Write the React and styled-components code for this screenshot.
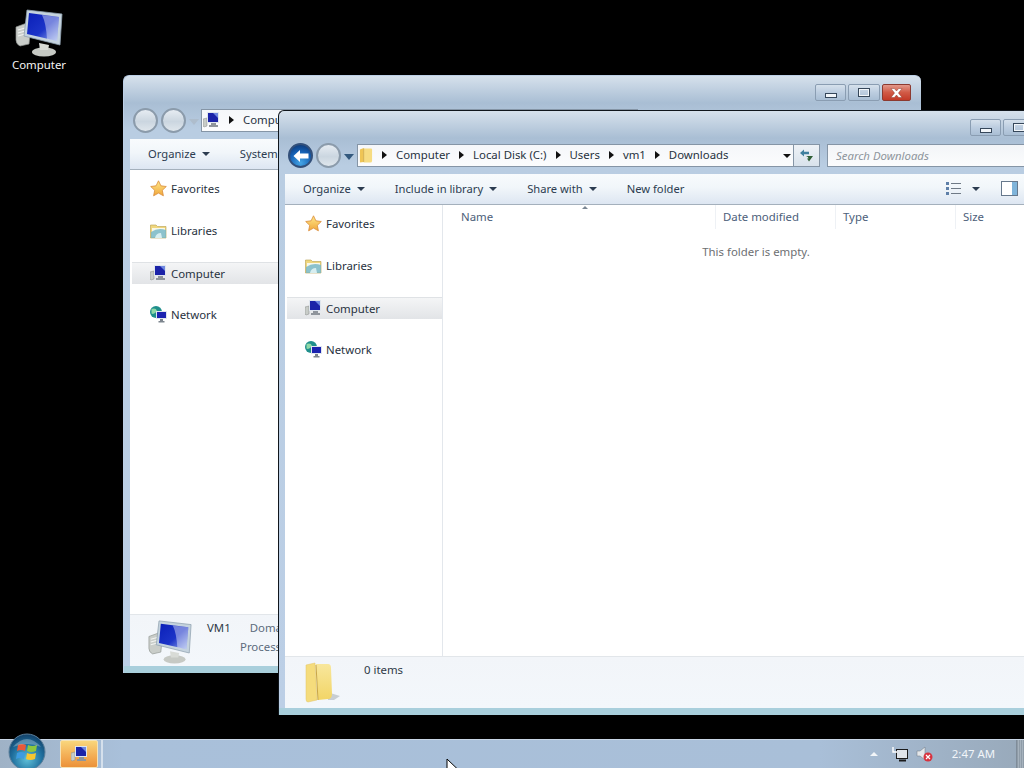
import React from 'react';
import styled, { createGlobalStyle } from 'styled-components';

const ComputerIcon = ({ size = 48 }) => (
  <svg width={size} height={size} viewBox="0 0 48 48">
    <defs>
      <linearGradient id="screen" x1="0" y1="0" x2="1" y2="1">
        <stop offset="0" stopColor="#0a1fb8" />
        <stop offset="0.55" stopColor="#1c34c8" />
        <stop offset="1" stopColor="#9fb4ec" />
      </linearGradient>
    </defs>
    <path d="M1 18 L12 14 L16 15 L14 35 L5 37 Q1 35 1 31 Z" fill="#c9cdc9" stroke="#8f9490" strokeWidth="0.7" />
    <path d="M3 21 L10 19 M3 24 L10 22 M3 27 L10 25" stroke="#f2f4f2" strokeWidth="1.2" />
    <ellipse cx="29" cy="43" rx="12" ry="4.5" fill="#c6c9c4" />
    <path d="M24 34 L34 36 L33 41 L25 41 Z" fill="#d8dbd6" />
    <path d="M12 1 L47 5 L45 36 L9 27 Z" fill="#c5d3de" stroke="#8ea0ae" strokeWidth="0.8" />
    <path d="M14 4 L44 8 L42 32 L12 25 Z" fill="url(#screen)" />
    <path d="M27 6 L44 8 L42 32 L32 30 Q31 14 27 6 Z" fill="#fff" opacity="0.4" />
  </svg>
);

const SmallComputerIcon = () => (
  <svg width="17" height="16" viewBox="0 0 17 16">
    <path d="M0 7 L4 6 L4 14 L1 15 L0 14 Z" fill="#c8ccc8" stroke="#868b88" strokeWidth="0.5" />
    <path d="M4 0 H16 V11 H4 Z" fill="#dfe6ee" />
    <path d="M5 1 H15 V10 H5 Z" fill="#1b23a8" />
    <path d="M10 1 H15 V6 Z" fill="#6f88e0" />
    <path d="M8 11 H13 V13 H15 V15 H6 V13 H8 Z" fill="#8f959c" />
  </svg>
);

const StarIcon = () => (
  <svg width="17" height="17" viewBox="0 0 17 17">
    <defs>
      <linearGradient id="star" x1="0" y1="0" x2="0" y2="1">
        <stop offset="0" stopColor="#ffe98a" />
        <stop offset="1" stopColor="#f0a63a" />
      </linearGradient>
    </defs>
    <path d="M8.5 0.8 L10.9 5.8 L16.3 6.5 L12.3 10.3 L13.4 15.8 L8.5 13.1 L3.6 15.8 L4.7 10.3 L0.7 6.5 L6.1 5.8 Z" fill="url(#star)" stroke="#d98b3a" strokeWidth="0.8" />
  </svg>
);

const LibraryIcon = () => (
  <svg width="17" height="16" viewBox="0 0 17 16">
    <path d="M0.5 2 H6 L7.5 3.5 H16 V15 H0.5 Z" fill="#f0d77e" stroke="#b79e4e" strokeWidth="0.6" />
    <path d="M2 5 H15 V14 H2 Z" fill="#f8f8ea" />
    <path d="M1 9 Q8 4 16 7 V15 H1 Z" fill="#79b9c8" opacity="0.85" />
    <path d="M5 15 Q6 10 11 10 L12 15 Z" fill="#d7eef0" />
  </svg>
);

const NetworkIcon = () => (
  <svg width="17" height="17" viewBox="0 0 17 17">
    <circle cx="6" cy="6" r="6" fill="#1f8f8c" />
    <path d="M1.5 3 Q6 1.5 7 5 Q4 9 1.5 7.5 Z" fill="#8fd8a8" />
    <path d="M6 5 H17 V13 H6 Z" fill="#dfe6ee" />
    <path d="M7 6 H16 V12 H7 Z" fill="#1b23b0" />
    <path d="M10 13 H13 V15 H14.5 V16.5 H8.5 V15 H10 Z" fill="#7d858e" />
  </svg>
);

const FolderSmall = () => (
  <svg width="14" height="17" viewBox="0 0 15 17">
    <path d="M1 2 L5 0.5 V15.5 L1 16 Z" fill="#efc555" />
    <path d="M5 1 H13 Q14 1 14 2 V14 Q14 16 12 16 H5 Z" fill="#f6dc82" />
    <path d="M5 1 V15.5" stroke="#caa23f" strokeWidth="0.8" />
  </svg>
);

const FolderLarge = () => (
  <svg width="38" height="42" viewBox="0 0 38 42">
    <defs>
      <linearGradient id="bigFolder" x1="0" y1="0" x2="0" y2="1">
        <stop offset="0" stopColor="#f8e79c" />
        <stop offset="1" stopColor="#f2d566" />
      </linearGradient>
    </defs>
    <path d="M23 30 L36 34 L30 38 L24 38 Z" fill="#b9c0c6" opacity="0.75" />
    <path d="M2 3 L11 1 L13 38 L4 40 Q2 40 2 37 Z" fill="#f5dc7c" stroke="#e2c466" strokeWidth="0.5" />
    <path d="M12 2 H24 Q27 2 27 6 L28 32 Q28 37 24 37 L14 38 Z" fill="url(#bigFolder)" />
    <path d="M12 3 L14 38" stroke="#c9a645" strokeWidth="1" />
  </svg>
);

const ArrowIcon = () => (
  <svg width="18" height="14" viewBox="0 0 18 14">
    <path d="M8 1 L1.5 7 L8 13 V9.5 H16.5 V4.5 H8 Z" fill="#fff" />
  </svg>
);

const RefreshIcon = () => (
  <svg width="15" height="15" viewBox="0 0 15 15">
    <path d="M1 5 L5 1.5 V3.8 H10 V6.2 H5 V8.5 Z" fill="#3f7f9e" />
    <path d="M14 8 L10 13.5 L8 10.5 H9.5 Q9.5 8.5 7 8 Z" fill="#2f5f35" />
  </svg>
);

const ViewsIcon = () => (
  <svg width="16" height="13" viewBox="0 0 16 13">
    <g fill="#5e7fa8">
      <rect x="0" y="0" width="3" height="3" />
      <rect x="0" y="5" width="3" height="3" />
      <rect x="0" y="10" width="3" height="3" />
    </g>
    <g fill="#6f7a86">
      <rect x="5" y="1" width="10" height="1" />
      <rect x="5" y="6" width="10" height="1" />
      <rect x="5" y="11" width="10" height="1" />
    </g>
  </svg>
);

const PaneIcon = () => (
  <svg width="17" height="15" viewBox="0 0 17 15">
    <rect x="0.5" y="0.5" width="16" height="14" fill="#fff" stroke="#66788c" />
    <rect x="11" y="1" width="5" height="13" fill="#7fb4da" />
  </svg>
);

const CloseGlyph = () => (
  <svg width="13" height="10" viewBox="0 0 13 10">
    <path d="M1 0.5 H4.3 L6.5 3 L8.7 0.5 H12 L8.4 5 L12 9.5 H8.7 L6.5 7 L4.3 9.5 H1 L4.6 5 Z" fill="#fff" stroke="#7a2a20" strokeWidth="0.4" />
  </svg>
);

const WindowsOrb = () => (
  <svg width="38" height="38" viewBox="0 0 38 38">
    <defs>
      <radialGradient id="orb" cx="0.5" cy="0.7" r="0.7">
        <stop offset="0" stopColor="#5fc0d8" />
        <stop offset="0.6" stopColor="#1f6f9e" />
        <stop offset="1" stopColor="#123f66" />
      </radialGradient>
    </defs>
    <circle cx="19" cy="19" r="18" fill="url(#orb)" stroke="#5c7f9a" />
    <path d="M10 12 Q14 10 18 12 L17 18 Q13 16 9 18 Z" fill="#e8593a" />
    <path d="M20 12 Q24 14 29 12 L28 18 Q23 20 19 18 Z" fill="#8cc63f" />
    <path d="M9 20 Q13 18 17 20 L16 26 Q12 24 8 26 Z" fill="#3d9be0" />
    <path d="M19 20 Q23 22 28 20 L27 26 Q22 28 18 26 Z" fill="#f7c631" />
    <path d="M5 14 Q19 -2 33 14 Q19 8 5 14 Z" fill="#fff" opacity="0.28" />
  </svg>
);

const NetworkTrayIcon = () => (
  <svg width="16" height="16" viewBox="0 0 16 16">
    <rect x="4.5" y="3.5" width="11" height="9" fill="#dfe4ea" stroke="#1b1b1b" />
    <path d="M1 1 V6 H5" fill="none" stroke="#fff" strokeWidth="1.4" />
    <path d="M7 14.5 H14" stroke="#1b1b1b" strokeWidth="2" />
  </svg>
);

const VolumeIcon = () => (
  <svg width="17" height="16" viewBox="0 0 17 16">
    <path d="M1 5 H4 L9 1 V14 L4 10 H1 Z" fill="#e4e7ea" stroke="#6c7680" strokeWidth="0.5" />
    <circle cx="12" cy="11" r="4.5" fill="#d8333f" />
    <path d="M10 9 L14 13 M14 9 L10 13" stroke="#fff" strokeWidth="1.2" />
  </svg>
);

const CursorIcon = () => (
  <svg width="13" height="20" viewBox="0 0 13 20">
    <path d="M1 1 V16 L4.5 12.5 L7 18 L9.5 17 L7 11.5 H12 Z" fill="#fff" stroke="#000" strokeWidth="1" />
  </svg>
);

const navItems = [
  { label: 'Favorites', icon: <StarIcon /> },
  { label: 'Libraries', icon: <LibraryIcon /> },
  { label: 'Computer', icon: <SmallComputerIcon />, active: true },
  { label: 'Network', icon: <NetworkIcon /> },
];

const columns = [
  { label: 'Name', width: 262 },
  { label: 'Date modified', width: 120 },
  { label: 'Type', width: 120 },
  { label: 'Size', width: 90 },
];

const NavPane = ({ width }) => (
  <Pane $width={width}>
    {navItems.map((item) => (
      <NavItem key={item.label} $active={item.active}>
        <NavIcon>{item.icon}</NavIcon>
        {item.label}
      </NavItem>
    ))}
  </Pane>
);

const Controls = () => (
  <ControlRow>
    <ControlButton $w={31}><MinGlyph /></ControlButton>
    <ControlButton $w={32}><MaxGlyph /></ControlButton>
    <CloseButton><CloseGlyph /></CloseButton>
  </ControlRow>
);

const App = () => (
  <>
    <GlobalStyle />
    <Desktop>
      <DesktopIcon>
        <ComputerIcon />
        <DesktopLabel>Computer</DesktopLabel>
      </DesktopIcon>

      <Window $left={123} $top={75} $height={598} $z={1} $edge="#bccfe6">
        <TitleBar><Controls /></TitleBar>
        <NavRow>
          <RoundButton />
          <RoundButton />
          <HistoryCaret $faded />
          <AddressBar>
            <Crumb><SmallComputerIcon /></Crumb>
            <CrumbArrow />
            <Crumb>Computer</Crumb>
          </AddressBar>
        </NavRow>
        <Toolbar>
          <ToolButton>Organize<Caret /></ToolButton>
          <ToolButton>System properties</ToolButton>
        </Toolbar>
        <Body $height={444}>
          <NavPane width={160} />
        </Body>
        <Details>
          <DetailsIcon $pad={18}><ComputerIcon size={44} /></DetailsIcon>
          <SystemInfo>
            <InfoRow>
              <span>VM1</span>
              <InfoMuted>Domain</InfoMuted>
            </InfoRow>
            <ProcessorRow>Processor</ProcessorRow>
          </SystemInfo>
        </Details>
      </Window>

      <Window $left={278} $top={110} $height={605} $z={2} $edge="#10161c">
        <TitleBar><Controls /></TitleBar>
        <NavRow>
          <BackButton><ArrowIcon /></BackButton>
          <RoundButton />
          <HistoryCaret />
          <AddressBar>
            <Crumb><FolderSmall /></Crumb>
            <CrumbArrow />
            {['Computer', 'Local Disk (C:)', 'Users', 'vm1', 'Downloads'].map((name, i, all) => (
              <React.Fragment key={name}>
                <Crumb>{name}</Crumb>
                {i < all.length - 1 && <CrumbArrow />}
              </React.Fragment>
            ))}
            <AddressEnd><Caret $dark /></AddressEnd>
          </AddressBar>
          <RefreshButton><RefreshIcon /></RefreshButton>
          <SearchBox>Search Downloads</SearchBox>
        </NavRow>
        <Toolbar>
          <ToolButton>Organize<Caret /></ToolButton>
          <ToolButton>Include in library<Caret /></ToolButton>
          <ToolButton>Share with<Caret /></ToolButton>
          <ToolButton>New folder</ToolButton>
          <ToolSpacer />
          <ViewButton><ViewsIcon /><Caret /></ViewButton>
          <PaneButton><PaneIcon /></PaneButton>
        </Toolbar>
        <Body $height={451}>
          <NavPane width={158} />
          <Files>
            <ColumnHeader>
              {columns.map((col) => (
                <Column key={col.label} $width={col.width}>{col.label}</Column>
              ))}
              <SortMark />
            </ColumnHeader>
            <EmptyNote>This folder is empty.</EmptyNote>
          </Files>
        </Body>
        <Details>
          <DetailsIcon $pad={19}><FolderLarge /></DetailsIcon>
          <ItemCount>0 items</ItemCount>
        </Details>
      </Window>

      <Taskbar>
        <StartOrb><WindowsOrb /></StartOrb>
        <TaskButton><SmallComputerIcon /></TaskButton>
        <TaskEdge />
        <TaskSpacer />
        <Tray>
          <TrayCaret />
          <NetworkTrayIcon />
          <TrayVolume><VolumeIcon /></TrayVolume>
          <Clock>2:47 AM</Clock>
          <ShowDesktop />
        </Tray>
      </Taskbar>

      <Pointer><CursorIcon /></Pointer>
    </Desktop>
  </>
);

export default App;

const GlobalStyle = createGlobalStyle`
  html, body {
    margin: 0;
    padding: 0;
    background: #000;
  }
  * {
    box-sizing: border-box;
  }
`;

const Desktop = styled.div`
  position: relative;
  width: 1024px;
  height: 768px;
  overflow: hidden;
  background: #000;
  font-family: "Noto Sans", "Open Sans", sans-serif;
  font-size: 11.4px;
`;

const DesktopIcon = styled.div`
  position: absolute;
  left: 4px;
  top: 9px;
  width: 70px;
  display: flex;
  flex-direction: column;
  align-items: center;
`;

const DesktopLabel = styled.div`
  color: #f4f4f4;
  line-height: 16px;
`;

const Window = styled.div`
  position: absolute;
  left: ${({ $left }) => $left}px;
  top: ${({ $top }) => $top}px;
  z-index: ${({ $z }) => $z};
  width: 798px;
  height: ${({ $height }) => $height}px;
  display: flex;
  flex-direction: column;
  padding: 0 7px 7px 6px;
  border-radius: 6px 6px 0 0;
  border: 1px solid ${({ $edge }) => $edge};
  border-width: 1px 0 0 1px;
  background: linear-gradient(180deg, #d6e1ec 0%, #a9bed4 4.5%, #b9cde2 9%, #bccfe6 100%);
  box-shadow: inset 0 -7px 0 #a9cfdc;
`;

const TitleBar = styled.div`
  height: 32px;
  flex: none;
  display: flex;
  justify-content: flex-end;
  padding: 8px 3px 0 0;
`;

const ControlRow = styled.div`
  display: flex;
  gap: 2px;
  height: 17px;
`;

const ControlButton = styled.div`
  width: ${({ $w }) => $w}px;
  display: flex;
  align-items: center;
  justify-content: center;
  border: 1px solid #8a9db2;
  border-radius: 2px;
  background: linear-gradient(180deg, #d6e1ec 0%, #bccde0 50%, #a9bed4 100%);
`;

const MinGlyph = styled.div`
  width: 12px;
  height: 5px;
  margin-top: 5px;
  border: 1px solid #36475a;
  background: #f2f6fa;
`;

const MaxGlyph = styled.div`
  width: 12px;
  height: 9px;
  border: 2px solid #f2f6fa;
  outline: 1px solid #36475a;
  outline-offset: -1px;
`;

const CloseButton = styled.div`
  width: 29px;
  display: flex;
  align-items: center;
  justify-content: center;
  border: 1px solid #8c3a30;
  border-radius: 2px;
  background: linear-gradient(180deg, #e2988a 0%, #d15a46 50%, #c23a28 100%);
`;

const NavRow = styled.div`
  height: 25px;
  flex: none;
  display: flex;
  align-items: center;
  padding-left: 3px;
`;

const RoundButton = styled.div`
  width: 25px;
  height: 25px;
  margin-right: 3px;
  flex: none;
  border-radius: 50%;
  border: 2px solid #8b9bab;
  background: linear-gradient(180deg, #e6ecf2 0%, #cbd6e0 55%, #dfe6ec 100%);
`;

const BackButton = styled(RoundButton)`
  display: flex;
  align-items: center;
  justify-content: center;
  border-color: #33507a;
  background: radial-gradient(circle at 50% 85%, #46a6e6 0%, #1460b4 55%, #0d2f68 100%);
`;

const HistoryCaret = styled.div`
  width: 0;
  height: 0;
  margin: 2px ${({ $faded }) => ($faded ? 2 : 3)}px 0 0;
  flex: none;
  border-left: 5px solid transparent;
  border-right: 5px solid transparent;
  border-top: 6px solid ${({ $faded }) => ($faded ? '#aebdcc' : '#33597e')};
`;

const AddressBar = styled.div`
  flex: none;
  width: 437px;
  height: 23px;
  display: flex;
  align-items: center;
  padding: 0 0 1px 1px;
  color: #27323e;
  border: 1px solid #8595a6;
  background: linear-gradient(180deg, #f5f7fa 0%, #fbfcfd 100%);
`;

const Crumb = styled.span`
  display: inline-flex;
  align-items: center;
  white-space: nowrap;
  line-height: 16px;
`;

const CrumbArrow = styled.span`
  width: 0;
  height: 0;
  margin: 0 9px;
  flex: none;
  border-top: 4px solid transparent;
  border-bottom: 4px solid transparent;
  border-left: 5px solid #111;
`;

const AddressEnd = styled.span`
  margin-left: auto;
  margin-right: 2px;
  display: inline-flex;
`;

const RefreshButton = styled.div`
  width: 26px;
  height: 23px;
  flex: none;
  display: flex;
  align-items: center;
  justify-content: center;
  border: 1px solid #8595a6;
  border-left: 0;
  background: linear-gradient(180deg, #eef2f6 0%, #d8e2ec 100%);
`;

const SearchBox = styled.div`
  width: 260px;
  height: 23px;
  flex: none;
  margin-left: 7px;
  padding: 0 0 1px 8px;
  display: flex;
  align-items: center;
  font-style: italic;
  color: #8e959c;
  border: 1px solid #8595a6;
  background: linear-gradient(180deg, #f3f5f8 0%, #fbfcfd 100%);
`;

const Toolbar = styled.div`
  height: 31px;
  margin-top: 6px;
  flex: none;
  display: flex;
  align-items: center;
  padding: 0 10px 2px 18px;
  color: #2c3c50;
  font-size: 11.2px;
  border-bottom: 1px solid #a4b0bc;
  background: linear-gradient(180deg, #f8fbfd 0%, #f1f6fa 45%, #dde6f2 100%);
`;

const ToolButton = styled.div`
  display: flex;
  align-items: center;
  gap: 5px;
  margin-right: 30px;
  white-space: nowrap;
`;

const Caret = styled.span`
  width: 0;
  height: 0;
  margin-left: 1px;
  margin-top: 1px;
  border-left: 4px solid transparent;
  border-right: 4px solid transparent;
  border-top: 4px solid ${({ $dark }) => ($dark ? '#111' : '#2c3c50')};
`;

const ToolSpacer = styled.div`
  flex: 1;
`;

const ViewButton = styled.div`
  display: flex;
  align-items: center;
  gap: 9px;
  margin-right: 21px;
`;

const PaneButton = styled.div`
  display: flex;
  margin-right: 41px;
`;

const Body = styled.div`
  height: ${({ $height }) => $height}px;
  flex: none;
  display: flex;
  background: #fff;
  overflow: hidden;
`;

const Pane = styled.div`
  width: ${({ $width }) => $width}px;
  flex: none;
  display: flex;
  flex-direction: column;
  gap: 20px;
  padding-top: 8px;
  color: #28323e;
  border-right: 1px solid #e3e7ec;
`;

const NavItem = styled.div`
  height: 22px;
  margin-left: 2px;
  display: flex;
  align-items: center;
  padding: 0 0 1px 18px;
  white-space: nowrap;
  ${({ $active }) =>
    $active &&
    `
    border-top: 1px solid #dfe2e5;
    background: linear-gradient(180deg, #f4f5f6 0%, #e2e4e7 100%);
  `}
`;

const NavIcon = styled.span`
  width: 21px;
  flex: none;
  display: inline-flex;
  align-items: center;
`;

const Files = styled.div`
  flex: 1;
  display: flex;
  flex-direction: column;
  min-width: 0;
`;

const ColumnHeader = styled.div`
  position: relative;
  height: 24px;
  flex: none;
  display: flex;
  padding-left: 11px;
  color: #4c607a;
`;

const Column = styled.div`
  width: ${({ $width }) => $width}px;
  flex: none;
  padding: 4px 0 0 7px;
  line-height: 16px;
  border-right: 1px solid #eef1f5;
`;

const SortMark = styled.span`
  position: absolute;
  left: 139px;
  top: 1px;
  width: 0;
  height: 0;
  border-left: 3px solid transparent;
  border-right: 3px solid transparent;
  border-bottom: 3px solid #7b8794;
`;

const EmptyNote = styled.div`
  margin-top: 15px;
  text-align: center;
  color: #6d6f72;
  line-height: 16px;
`;

const Details = styled.div`
  flex: 1;
  min-height: 0;
  display: flex;
  border-top: 1px solid #e2e6ea;
  background: linear-gradient(180deg, #f2f5f9 0%, #f3f7fb 100%);
  color: #2f3a47;
`;

const DetailsIcon = styled.div`
  padding: 5px 0 0 ${({ $pad }) => $pad}px;
  display: flex;
`;

const ItemCount = styled.div`
  margin: 5px 0 0 22px;
  line-height: 16px;
`;

const SystemInfo = styled.div`
  margin: 5px 0 0 15px;
  display: flex;
  flex-direction: column;
  gap: 3px;
  line-height: 16px;
  white-space: nowrap;
`;

const InfoRow = styled.div`
  display: flex;
  gap: 19px;
`;

const InfoMuted = styled.span`
  color: #5c6b7c;
`;

const ProcessorRow = styled(InfoMuted)`
  padding-left: 33px;
`;

const Taskbar = styled.div`
  position: absolute;
  left: 0;
  right: 0;
  bottom: 0;
  z-index: 3;
  height: 29px;
  display: flex;
  align-items: stretch;
  border-top: 1px solid #c9d6e6;
  background: linear-gradient(90deg, #9fb2c6 0%, #a9c0da 12%, #a9bfd8 80%, #98a9ba 100%);
`;

const StartOrb = styled.div`
  width: 60px;
  flex: none;
  margin-top: -7px;
  padding-left: 8px;
  display: flex;
  align-items: flex-start;
`;

const TaskButton = styled.div`
  width: 38px;
  flex: none;
  display: flex;
  align-items: center;
  justify-content: center;
  border: 1px solid #f5e2b6;
  border-radius: 2px;
  background: linear-gradient(180deg, #f9d67c 0%, #f3ab52 60%, #eb9138 100%);
`;

const TaskEdge = styled.div`
  width: 2px;
  margin-left: 3px;
  flex: none;
  background: #d5e0ec;
`;

const TaskSpacer = styled.div`
  flex: 1;
`;

const Tray = styled.div`
  display: flex;
  align-items: center;
  color: #f1f5f9;
`;

const TrayCaret = styled.span`
  width: 0;
  height: 0;
  margin-right: 14px;
  border-left: 4px solid transparent;
  border-right: 4px solid transparent;
  border-bottom: 4px solid #f2f5f8;
`;

const TrayVolume = styled.span`
  display: inline-flex;
  margin-left: 8px;
`;

const Clock = styled.div`
  margin: 0 21px 2px 19px;
  white-space: nowrap;
`;

const ShowDesktop = styled.div`
  width: 8px;
  align-self: stretch;
  border-left: 1px solid #7f8c99;
  background: repeating-linear-gradient(90deg, #8f9ca8 0 1px, #a6b2bd 1px 2px);
`;

const Pointer = styled.div`
  position: absolute;
  left: 446px;
  top: 758px;
  z-index: 4;
  display: flex;
`;
